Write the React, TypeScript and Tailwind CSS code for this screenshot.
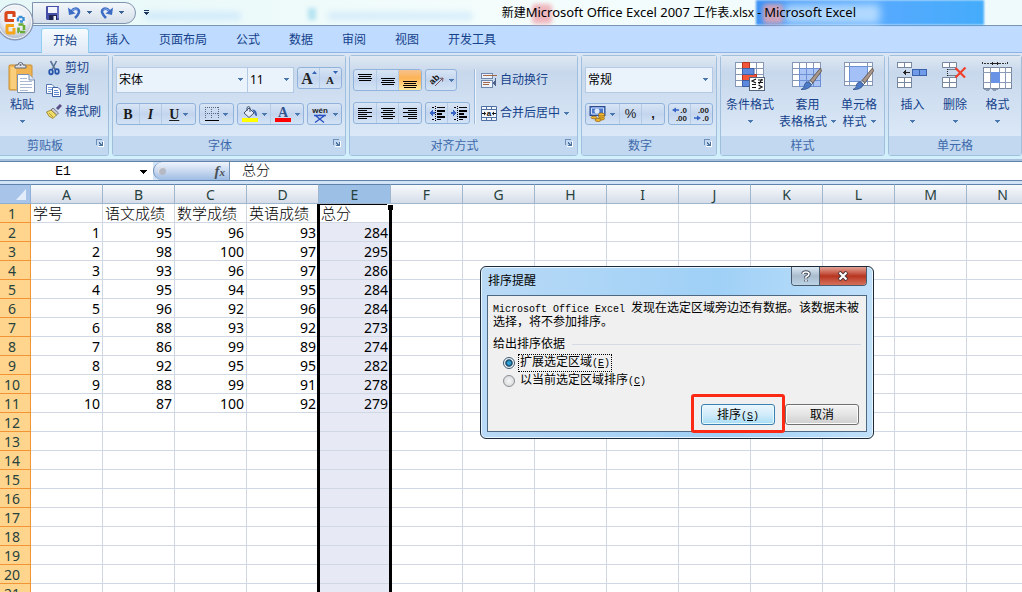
import React, { useState } from "react";

const COLUMNS = "ABCDEFGHIJKLMN".split("");
const TABS = ["开始", "插入", "页面布局", "公式", "数据", "审阅", "视图", "开发工具"];
const HEADINGS = ["学号", "语文成绩", "数学成绩", "英语成绩", "总分"];
const SCORES = [
  [1, 95, 96, 93, 284],
  [2, 98, 100, 97, 295],
  [3, 93, 96, 97, 286],
  [4, 95, 94, 95, 284],
  [5, 96, 92, 96, 284],
  [6, 88, 93, 92, 273],
  [7, 86, 99, 89, 274],
  [8, 92, 95, 95, 282],
  [9, 88, 99, 91, 278],
  [10, 87, 100, 92, 279],
];
const ROW_COUNT = 21;

interface ChildrenProps {
  children: React.ReactNode;
  className?: string;
}

function Caret({ className = "" }: { className?: string }) {
  return (
    <svg
      className={`shrink-0 ${className}`}
      width="5"
      height="3"
      viewBox="0 0 5 3"
      shapeRendering="crispEdges"
      fill="currentColor"
    >
      <path d="M0 0h5v1H0zM1 1h3v1H1zM2 2h1v1H2z" />
    </svg>
  );
}

function Pixels({
  w,
  h,
  children,
}: {
  w: number;
  h: number;
  children: React.ReactNode;
}) {
  return (
    <svg
      className="shrink-0"
      width={w}
      height={h}
      viewBox={`0 0 ${w} ${h}`}
      shapeRendering="crispEdges"
      fill="none"
    >
      {children}
    </svg>
  );
}

/* ---------- ribbon building blocks ---------- */

function Group({
  title,
  launcher = false,
  className = "",
  children,
}: ChildrenProps & { title: string; launcher?: boolean }) {
  return (
    <section
      className={`flex shrink-0 flex-col rounded-[3px] border border-[#9fbfdd] bg-linear-to-b from-[#dde7f2] to-[#dce9f7] shadow-[inset_1px_1px_0_#eaf2fa] ${className}`}
    >
      <div className="h-20 bg-linear-to-b from-[#dfe8f2] via-[#c8d8ec] via-20% to-[#dae8f7]">
        {children}
      </div>
      <footer
        className={`relative flex h-[19px] items-center justify-center bg-[#c1d8f0] text-[#3e6aaa] ${
          launcher ? "pr-[18px]" : ""
        }`}
      >
        {title}
        {launcher && (
          <button
            aria-label={`${title}选项`}
            className="absolute right-1 top-[3px] h-2 w-2"
          >
            <Pixels w={8} h={8}>
              <path d="M0 6V0h6v1H1v5z" fill="#7090b8" />
              <path d="M3 3h1v1h1v1h1V3h1v4H3V6h1V5H3z" fill="#4f739f" />
              <path d="M7 2h1v6H2V7h5z" fill="#fff" />
            </Pixels>
          </button>
        )}
      </footer>
    </section>
  );
}

function ButtonSet({ children, className = "" }: ChildrenProps) {
  return (
    <div
      className={`flex h-[22px] shrink-0 divide-x divide-[#b4cbe6] overflow-hidden rounded-[3px] border border-[#91b3db] bg-linear-to-b from-[#d8e5f5] via-[#c3d5ee] via-50% to-[#d3e3f6] ${className}`}
    >
      {children}
    </div>
  );
}

function Tool({
  label,
  caret = false,
  active = false,
  children,
}: {
  label: string;
  caret?: boolean;
  active?: boolean;
  children: React.ReactNode;
}) {
  return (
    <button
      aria-label={label}
      className={`flex items-center justify-center gap-1 text-[#1a1a1a] ${
        caret ? "flex-[3]" : "flex-[2]"
      } ${
        active ? "bg-linear-to-b from-[#f6c28c] via-[#fdb354] via-40% to-[#fee79b]" : ""
      }`}
    >
      {children}
      {caret && <Caret className="text-[#4a77ae]" />}
    </button>
  );
}

function Combo({
  label,
  value,
  className = "",
}: {
  label: string;
  value: string;
  className?: string;
}) {
  return (
    <div className={`relative h-[26px] text-[#4a77ae] ${className}`}>
      <select
        aria-label={label}
        defaultValue={value}
        className="h-full w-full appearance-none border border-[#b3c9e4] bg-[#eaf2fb] pl-[2px] text-[12px] text-black"
      >
        <option>{value}</option>
      </select>
      <Caret className="pointer-events-none absolute right-[5px] top-[11px]" />
    </div>
  );
}

function SmallCommand({
  label,
  caret = false,
  children,
}: {
  label: string;
  caret?: boolean;
  children: React.ReactNode;
}) {
  return (
    <button className="flex h-[22px] items-center gap-[3px] whitespace-nowrap text-[#15428b]">
      {children}
      {label}
      {caret && <Caret className="ml-px text-[#4a77ae]" />}
    </button>
  );
}

function BigCommand({
  lines,
  className = "",
  children,
}: {
  lines: string[];
  className?: string;
  children: React.ReactNode;
}) {
  return (
    <button
      className={`flex flex-col items-center whitespace-nowrap pt-[6px] leading-[17px] text-[#15428b] ${className}`}
    >
      <span className="flex h-[34px] items-start">{children}</span>
      <span>{lines[0]}</span>
      <span className="flex h-[17px] items-center gap-1">
        {lines[1]}
        <Caret className="text-[#4a77ae]" />
      </span>
    </button>
  );
}

/* ---------- icons ---------- */

function OfficeLogo() {
  return (
    <svg width="38" height="38" viewBox="0 0 38 38">
      <defs>
        <radialGradient id="orb" cx="50%" cy="35%" r="65%">
          <stop offset="0" stopColor="#ffffff" />
          <stop offset="0.6" stopColor="#e6eaf1" />
          <stop offset="1" stopColor="#a4b0c4" />
        </radialGradient>
      </defs>
      <circle cx="19" cy="19" r="18" fill="url(#orb)" stroke="#7d8da8" />
      <circle cx="19" cy="19" r="16.5" fill="none" stroke="#fff" strokeOpacity="0.8" />
      <g fill="none" strokeLinejoin="round">
        <path d="M18 17.500H10V11Q10 9.500 11.500 9.500H18V14" stroke="#d9481c" strokeWidth="3.200" />
        <path d="M22 18.500V14H27.500V18.500H24" stroke="#3c8fd6" strokeWidth="2.400" strokeDasharray="4 1" />
        <path d="M18 22.500H11V28.500Q11 30 12.500 30H18V25" stroke="#f4a51c" strokeWidth="3" />
        <path d="M22.500 21.500H28V29H22.500V24" stroke="#68ab35" strokeWidth="2.600" strokeDasharray="5 1" />
      </g>
    </svg>
  );
}

function SaveIcon() {
  return (
    <svg width="14" height="14" viewBox="0 0 14 14">
      <path d="M0 1Q0 0 1 0H13V14H1L0 13Z" fill="#4650a8" />
      <path d="M2 1H11V7H2Z" fill="#f3f5fc" />
      <path d="M3 9H11V14H3Z" fill="#20264f" />
      <path d="M7.500 10H10V14H7.500Z" fill="#eef1fa" />
      <path d="M12 1V12" stroke="#8d9be0" />
    </svg>
  );
}

function UndoIcon({ flip = false }: { flip?: boolean }) {
  return (
    <svg
      className={flip ? "-scale-x-100" : ""}
      width="13"
      height="13"
      viewBox="0 0 13 13"
      fill="none"
    >
      <path d="M3 5.500Q7 1 10 3.500T7 12" stroke="#3c6cc4" strokeWidth="2.600" />
      <path d="M0 1.500L1 9L7.500 7.500Z" fill="#3c6cc4" />
      <path d="M4 4.500Q8 1.500 9.500 4" stroke="#8fb2ea" />
    </svg>
  );
}

function PasteIcon() {
  return (
    <svg width="28" height="32" viewBox="0 0 28 32">
      <rect x="1" y="3" width="23" height="25" rx="1" fill="#f0b552" stroke="#c98f35" />
      <path d="M2.500 5H8V27H2.500Z" fill="#f9cf7d" />
      <path d="M7 6V4Q7 3 9 3H10Q10 0.500 12.500 0.500T15 3H16Q18 3 18 4V6Z" fill="#dfe3ea" stroke="#5e6678" />
      <circle cx="12.500" cy="3" r="1" fill="#5e6678" />
      <path d="M9.500 12.500H21L26.500 18V30.500H9.500Z" fill="#fff" stroke="#7a8fb4" />
      <path d="M21 12.500V18H26.500" fill="#dbe6f6" stroke="#7a8fb4" />
      <path d="M12 16.500H19M12 19.500H24M12 22.500H24M12 25.500H24M12 28.500H20" stroke="#a9b9d3" />
    </svg>
  );
}

function CutIcon() {
  return (
    <svg width="16" height="16" viewBox="0 0 16 16" fill="none">
      <path d="M4.500 1L9.500 10M10.500 1L6 10" stroke="#5d7396" strokeWidth="1.600" />
      <ellipse cx="5" cy="12" rx="1.800" ry="2.300" stroke="#2756ad" strokeWidth="1.800" />
      <ellipse cx="11" cy="11.500" rx="1.800" ry="2.300" stroke="#2756ad" strokeWidth="1.800" />
    </svg>
  );
}

function CopyIcon() {
  return (
    <svg width="16" height="16" viewBox="0 0 16 16" fill="none">
      <path d="M0.500 2.500H6L8.500 5V11.500H0.500Z" fill="#fff" stroke="#5577b2" />
      <path d="M2 5.500H6M2 7.500H6M2 9.500H5" stroke="#7ca0dc" />
      <path d="M6.500 5.500H12L14.500 8V14.500H6.500Z" fill="#fff" stroke="#3d62a6" />
      <path d="M8 8.500H12M8 10.500H13M8 12.500H13" stroke="#5c87d0" />
    </svg>
  );
}

function BrushIcon() {
  return (
    <svg width="16" height="16" viewBox="0 0 16 16">
      <path d="M11 5L15 1" stroke="#5a5288" strokeWidth="3" />
      <path d="M7 4L12.500 9L10.500 11L5 6Z" fill="#c8cad8" stroke="#5e6076" strokeWidth="0.800" />
      <path d="M5 6L10.500 11L7 14.500Q2 13 0.500 8Z" fill="#f0dc68" stroke="#8c7a28" strokeWidth="0.800" />
      <path d="M3 9L7.500 13.500" stroke="#b49a35" />
    </svg>
  );
}

function Lines({ widths, top = 2, align = "center" }: { widths: number[]; top?: number; align?: string }) {
  return (
    <Pixels w={14} h={15}>
      {widths.map((w, i) => (
        <rect
          key={i}
          x={align === "left" ? 0 : align === "right" ? 14 - w : Math.floor((14 - w) / 2)}
          y={top + i * 2}
          width={w}
          height="1"
          fill="#000"
        />
      ))}
    </Pixels>
  );
}

function BordersIcon() {
  return (
    <Pixels w={14} h={14}>
      <path
        d="M0 0.500H14M0 6.500H14M0.500 0V12M6.500 0V12M13.500 0V12"
        stroke="#5a6880"
        strokeDasharray="1 1"
      />
      <path d="M0 13.500H14" stroke="#000" />
    </Pixels>
  );
}

function FillIcon() {
  return (
    <svg width="16" height="16" viewBox="0 0 16 16">
      <path d="M2 7L7 2L12 7L7 11.500Z" fill="#e6edf8" stroke="#42526e" />
      <path d="M5 5V1.500Q6.500 -0.500 8 1.500V6" fill="none" stroke="#42526e" />
      <path d="M10 3.500Q15 3 15 10Q12.500 10 12.500 7Z" fill="#3c62ac" />
      <path d="M0 12H16V16H0Z" fill="#ffff00" />
    </svg>
  );
}

function FontColorIcon() {
  return (
    <svg width="16" height="16" viewBox="0 0 16 16">
      <text x="8" y="11" textAnchor="middle" fontSize="14" fontWeight="bold" fontFamily="Liberation Serif, serif" fill="#35558f">
        A
      </text>
      <path d="M0 12H16V16H0Z" fill="#ff0000" />
    </svg>
  );
}

function PhoneticIcon() {
  return (
    <svg width="18" height="20" viewBox="0 0 18 20">
      <text x="9" y="9" textAnchor="middle" fontSize="8" fontFamily="Liberation Sans, sans-serif" fill="#222">
        wén
      </text>
      <path d="M3 11.500H15M9 10.500V12M5 12L13 18.500M13 12L4 18.500" stroke="#2a4fc0" strokeWidth="1.300" fill="none" />
    </svg>
  );
}

function ResizeFontIcon({ shrink = false }: { shrink?: boolean }) {
  return (
    <svg width="18" height="18" viewBox="0 0 18 18">
      <text
        x={shrink ? 8 : 7}
        y="15"
        textAnchor="middle"
        fontSize={shrink ? 11 : 16}
        fontWeight="bold"
        fontFamily="Liberation Serif, serif"
        fill="#222"
      >
        A
      </text>
      <path d={shrink ? "M11 2H16L13.500 5Z" : "M12 5H17L14.500 2Z"} fill="#3262b4" />
    </svg>
  );
}

function OrientationIcon() {
  return (
    <svg width="17" height="18" viewBox="0 0 17 18">
      <text x="2" y="12" fontSize="9" fontWeight="bold" fontFamily="Liberation Sans, sans-serif" fill="#111" transform="rotate(-45 6 10)">
        ab
      </text>
      <path d="M7 15L15 7M15 7L11.500 7.500M15 7L14.500 10.500" stroke="#7a5862" fill="none" />
    </svg>
  );
}

function IndentIcon({ increase = false }: { increase?: boolean }) {
  return (
    <Pixels w={16} h={15}>
      <path d="M3 1.500H5M8 1.500H16M3 13.500H5M8 13.500H12" stroke="#000" />
      <path d="M8 4.500H16M8 7.500H13M8 10.500H16" stroke="#000" strokeWidth="2" />
      <path d="M6.500 0V15" stroke="#000" strokeDasharray="1 1" />
      <path
        d={increase ? "M0 6H2V4L6 7L2 10V8H0Z" : "M6 6H4V4L0 7L4 10V8H6Z"}
        fill="#3664c4"
      />
    </Pixels>
  );
}

function WrapIcon() {
  return (
    <Pixels w={16} h={15}>
      <path d="M0.500 0.500H11.500V5.500H0.500ZM0.500 7.500H11.500V14.500H0.500Z" fill="#eef3fb" stroke="#6f87ab" />
      <path d="M2 2.500H16" stroke="#a5694a" />
      <path d="M2 9.500H9M2 11.500H8" stroke="#a5694a" />
      <path d="M14.500 5V10H13M12 10L14 8V12Z" stroke="#4d6488" fill="#4d6488" />
    </Pixels>
  );
}

function MergeIcon() {
  return (
    <svg className="shrink-0" width="16" height="15" viewBox="0 0 16 15">
      <path d="M0.500 0.500H15.500V14.500H0.500Z" fill="#f3f7fd" stroke="#4d6fa4" />
      <path d="M0 3.500H16M0 11.500H16M5.500 0V4M10.500 0V4M5.500 11V15M10.500 11V15" stroke="#4d6fa4" />
      <path d="M1 7.500H4.500M11.500 7.500H15" stroke="#111" />
      <path d="M3 5.500L5 7.500L3 9.500ZM13 5.500L11 7.500L13 9.500Z" fill="#111" />
      <text x="8" y="10" textAnchor="middle" fontSize="8" fontWeight="bold" fontFamily="Liberation Sans, sans-serif" fill="#111">
        a
      </text>
    </svg>
  );
}

function CurrencyIcon() {
  return (
    <svg width="17" height="16" viewBox="0 0 17 16">
      <rect x="1" y="0.500" width="15" height="9" fill="#4c78cc" stroke="#2d4c8c" />
      <path d="M2.500 2H14.500V8H2.500Z" fill="none" stroke="#cfe0fa" />
      <ellipse cx="8" cy="5" rx="2.500" ry="2.500" fill="#dce8fb" />
      <g fill="#f5b92f" stroke="#8b5d10" strokeWidth="0.700">
        <ellipse cx="12.500" cy="12.500" rx="3" ry="1.500" />
        <ellipse cx="12.500" cy="10.500" rx="3" ry="1.500" />
        <ellipse cx="12.500" cy="8.500" rx="3" ry="1.500" />
        <ellipse cx="5" cy="11.500" rx="3" ry="1.300" />
        <ellipse cx="9" cy="14" rx="3" ry="1.500" />
      </g>
    </svg>
  );
}

function DecimalIcon({ decrease = false }: { decrease?: boolean }) {
  return (
    <svg width="17" height="16" viewBox="0 0 17 16" fontFamily="Liberation Sans, sans-serif" fontSize="8" fontWeight="bold">
      <text x="16" y="7" textAnchor="end" fill="#222">
        {decrease ? ".00" : ".0"}
      </text>
      <text x="16" y="15" textAnchor="end" fill="#222">
        {decrease ? ".0" : ".00"}
      </text>
      <path
        d={decrease ? "M1 11.300H4V9.500L8 12L4 14.500V12.700H1Z" : "M8 3.300H5V1.500L1 4L5 6.500V4.700H8Z"}
        fill="#3664c4"
      />
    </svg>
  );
}

function GridLines() {
  return (
    <>
      <rect x="0.500" y="0.500" width="28" height="24" fill="#fff" stroke="#8697b5" />
      <path
        d="M7.500 0V25M14.500 0V25M21.500 0V25M0 6.500H29M0 12.500H29M0 18.500H29"
        stroke="#8697b5"
      />
    </>
  );
}

function PaintBrush() {
  return (
    <g>
      <path d="M28.500 6L18 18.500L21 21L29.500 9Z" fill="#a8988c" stroke="#5d4c42" strokeWidth="0.800" />
      <path d="M18 18.500L21 21L19.500 22.500L16.500 20Z" fill="#d9dde5" stroke="#4b5568" strokeWidth="0.800" />
      <path d="M16.500 20L19.500 22.500Q17 28 9 27.500Q13 26 12.500 22.500Q13.500 19.500 16.500 20Z" fill="#4c7ac6" stroke="#2f4f88" strokeWidth="0.800" />
    </g>
  );
}

function ConditionalIcon() {
  return (
    <svg width="30" height="29" viewBox="0 0 30 29">
      <GridLines />
      <path d="M7.500 0.500H14.500V6.500H7.500ZM7.500 12.500H21.500V18.500H7.500Z" fill="#f2553a" stroke="#b53521" />
      <path d="M7.500 6.500H19V12.500H7.500ZM7.500 18.500H14.500V24.500H7.500Z" fill="#5d8ade" stroke="#3b5fa8" />
      <rect x="14.500" y="15.500" width="15" height="13" fill="#fff" stroke="#53657f" />
      <path d="M21 17L17 19L21 21M17 22.500H21M23 18H28M23 20.500H28M27 17L24 22M23.500 23L27 25L23.500 27M17 25.500H21" stroke="#111" fill="none" strokeWidth="1.200" />
    </svg>
  );
}

function TableStyleIcon() {
  return (
    <svg width="31" height="29" viewBox="0 0 31 29">
      <GridLines />
      <path d="M7.500 6.500H28.500V24.500H7.500Z" fill="#a9c4f5" />
      <path d="M7.500 6.500H28.500M7.500 12.500H28.500M7.500 18.500H28.500M7.500 24.500H28.500M7.500 6V25M14.500 6V25M21.500 6V25M28.500 6V25" stroke="#6c90d3" />
      <PaintBrush />
    </svg>
  );
}

function CellStyleIcon() {
  return (
    <svg width="31" height="29" viewBox="0 0 31 29">
      <rect x="0.500" y="0.500" width="28" height="23" fill="#fff" stroke="#8697b5" />
      <path d="M5.500 0V24M23.500 0V24M0 4.500H29M0 19.500H29" stroke="#8697b5" />
      <path d="M5.500 4.500H23.500V19.500H5.500Z" fill="#a4c1f7" stroke="#6c90d3" />
      <PaintBrush />
    </svg>
  );
}

function CellBlocks() {
  return (
    <path
      d="M0.500 0.500H14.500V5.500H0.500ZM0.500 15.500H14.500V25.500H0.500ZM7.500 0V6M7.500 15V26M0 20.500H15"
      fill="#fff"
      stroke="#77879f"
    />
  );
}

function InsertIcon() {
  return (
    <Pixels w={31} h={28}>
      <CellBlocks />
      <path d="M15.500 7.500H29.500V13.500H15.500ZM22.500 7V14" fill="#6f9be8" stroke="#3b62a8" />
      <path d="M6 10.500H13M8.500 8V13M7.500 9V12" stroke="#222" />
    </Pixels>
  );
}

function DeleteIcon() {
  return (
    <svg width="26" height="28" viewBox="0 0 26 28">
      <CellBlocks />
      <path d="M5.500 7.500H15M5.500 13.500H15M5.500 7V14" stroke="#222" strokeDasharray="1 1" fill="none" />
      <path d="M13.500 6L23 15.500M23.500 5.500L13.500 15.500" stroke="#f0402a" strokeWidth="2.200" />
    </svg>
  );
}

function FormatIcon() {
  return (
    <Pixels w={31} h={30}>
      <path d="M0.500 0V3M25.500 0V3M2 1.500H24" stroke="#333" strokeDasharray="2 1" />
      <path d="M9 1.500H17M10.500 0V3M15.500 0V3" stroke="#222" />
      <rect x="1.500" y="5.500" width="28" height="21" fill="#fff" stroke="#77879f" />
      <path d="M8.500 5V27M17.500 5V27M23.500 5V27M1 10.500H30M1 20.500H30" stroke="#8c9bb5" />
      <rect x="9" y="10" width="9" height="11" fill="#6994e6" />
      <path d="M2 27.500H8M10 27.500H16M4 28.500H7M11 28.500H14" stroke="#8c9bb5" />
    </Pixels>
  );
}

/* ---------- window areas ---------- */

function TitleBar() {
  return (
    <header className="relative flex h-[26px] shrink-0 items-center border-b border-[#7b96b5] bg-linear-to-r from-[#e6f7f8] via-[#f4fdfc] to-[#effafd]">
      <div className="absolute inset-y-0 left-[74%] right-[38px] bg-linear-to-r from-[#3f93f5] via-[#58aaff] to-[#44acfb] blur-[1px]" />
      <div className="absolute left-[532px] top-1 h-5 w-5 rounded bg-[#eda6ae] opacity-80 blur-[2px]" />
      <div className="absolute left-[784px] top-1 h-5 w-24 rounded bg-[#c9e6ff] opacity-80 blur-[4px]" />
      <div className="absolute left-[763px] top-1 h-5 w-5 rounded bg-[#eda6ae] opacity-80 blur-[2px]" />
      <div className="absolute left-[145px] top-3 h-2 w-24 bg-[#bfe0fb] opacity-60 blur-[3px]" />
      <div className="absolute left-[308px] top-2 h-3 w-2 bg-[#8fd4ec] opacity-60 blur-[2px]" />
      <div className="absolute left-[328px] top-3 h-2 w-36 bg-[#c4e2fa] opacity-60 blur-[3px]" />
      <button aria-label="Office 按钮" className="absolute -left-1 top-[3px] z-10">
        <OfficeLogo />
      </button>
      <div className="relative ml-8 flex h-[22px] w-[104px] items-center rounded-r-full border border-[#7f93ad] bg-linear-to-b from-[#f3f7fb] to-[#d5dfea] pl-[13px] text-[#3c6296]">
        <button aria-label="保存">
          <SaveIcon />
        </button>
        <button aria-label="撤消" className="ml-2 flex items-center gap-[6px]">
          <UndoIcon />
          <Caret />
        </button>
        <button aria-label="恢复" className="ml-2 flex items-center gap-[6px]">
          <UndoIcon flip />
          <Caret />
        </button>
      </div>
      <button aria-label="自定义快速访问工具栏" className="relative ml-2 text-[#1c355e]">
        <Pixels w={5} h={5}>
          <path d="M0 0h5v1H0zM0 2h5v1H0zM1 3h3v1H1zM2 4h1v1H2z" fill="currentColor" />
        </Pixels>
      </button>
      <h1 className="relative ml-auto mr-[166px] flex items-baseline whitespace-pre pt-px text-[13px] text-black">
        <span className="text-[12px]">新建</span>
        Microsoft Office Excel 2007{" "}
        <span className="text-[12px]">工作表.xlsx - </span>
        Microsoft Excel
      </h1>
    </header>
  );
}

function TabStrip() {
  return (
    <nav className="flex h-[27px] shrink-0 items-end gap-[5px] border-b border-[#8db2e3] bg-[#bfdbff] pl-[41px] text-[#15428b]">
      {TABS.map((tab, i) => (
        <button
          key={tab}
          className={`h-[25px] rounded-t-[3px] px-3 ${
            i === 0
              ? "-mb-px border border-b-0 border-[#8fd0ee] bg-linear-to-b from-[#f5fafe] to-[#dfe9f5] px-[11px] pb-px"
              : ""
          }`}
        >
          {tab}
        </button>
      ))}
    </nav>
  );
}

function Ribbon() {
  return (
    <div className="flex h-[108px] shrink-0 items-start gap-[3px] border-b-2 border-[#a9bfdc] bg-linear-to-b from-[#dbe6f4] via-[#d0e1f3] to-[#d2f1fc] pt-[2px] text-[12px]">
      <Group title="剪贴板" launcher className="w-[109px] rounded-l-none border-l-0">
        <div className="flex gap-[10px] pl-2">
          <BigCommand lines={["粘贴"]}>
            <PasteIcon />
          </BigCommand>
          <div className="flex flex-col pt-[1px]">
            <SmallCommand label="剪切">
              <CutIcon />
            </SmallCommand>
            <SmallCommand label="复制">
              <CopyIcon />
            </SmallCommand>
            <SmallCommand label="格式刷">
              <BrushIcon />
            </SmallCommand>
          </div>
        </div>
      </Group>

      <Group title="字体" launcher className="w-[234px]">
        <div className="flex flex-col gap-[10px] px-[3px] pt-[11px]">
          <div className="flex">
            <Combo label="字体" value="宋体" className="w-[132px]" />
            <Combo label="字号" value="11" className="-ml-px w-[47px]" />
            <ButtonSet className="ml-[3px] w-[45px]">
              <Tool label="增大字号">
                <ResizeFontIcon />
              </Tool>
              <Tool label="减小字号">
                <ResizeFontIcon shrink />
              </Tool>
            </ButtonSet>
          </div>
          <div className="flex gap-[3px] font-['Liberation_Serif',serif] text-[14px] font-bold">
            <ButtonSet className="w-20">
              <Tool label="加粗">B</Tool>
              <Tool label="倾斜">
                <i>I</i>
              </Tool>
              <Tool label="下划线" caret>
                <u>U</u>
              </Tool>
            </ButtonSet>
            <ButtonSet className="w-[35px]">
              <Tool label="边框" caret>
                <BordersIcon />
              </Tool>
            </ButtonSet>
            <ButtonSet className="w-[67px]">
              <Tool label="填充颜色" caret>
                <FillIcon />
              </Tool>
              <Tool label="字体颜色" caret>
                <FontColorIcon />
              </Tool>
            </ButtonSet>
            <ButtonSet className="w-[35px]">
              <Tool label="拼音指南" caret>
                <PhoneticIcon />
              </Tool>
            </ButtonSet>
          </div>
        </div>
      </Group>

      <Group title="对齐方式" launcher className="w-[229px]">
        <div className="flex gap-[4px] pl-[3px] pt-[13px]">
          <div className="flex flex-col gap-[11px]">
            <div className="flex gap-[3px]">
              <ButtonSet className="w-[69px]">
                <Tool label="顶端对齐">
                  <Lines widths={[14, 12, 14, 12]} top={1} />
                </Tool>
                <Tool label="垂直居中">
                  <Lines widths={[14, 12, 14, 12]} top={5} />
                </Tool>
                <Tool label="底端对齐" active>
                  <Lines widths={[14, 12, 14, 12]} top={8} />
                </Tool>
              </ButtonSet>
              <ButtonSet className="w-8">
                <Tool label="方向" caret>
                  <OrientationIcon />
                </Tool>
              </ButtonSet>
            </div>
            <div className="flex gap-[3px]">
              <ButtonSet className="w-[69px]">
                <Tool label="文本左对齐">
                  <Lines widths={[14, 9, 14, 9, 14, 9]} align="left" />
                </Tool>
                <Tool label="居中">
                  <Lines widths={[14, 10, 14, 10, 14, 10]} />
                </Tool>
                <Tool label="文本右对齐">
                  <Lines widths={[14, 9, 14, 9, 14, 9]} align="right" />
                </Tool>
              </ButtonSet>
              <ButtonSet className="w-[45px]">
                <Tool label="减少缩进量">
                  <IndentIcon />
                </Tool>
                <Tool label="增加缩进量">
                  <IndentIcon increase />
                </Tool>
              </ButtonSet>
            </div>
          </div>
          <div className="flex flex-col gap-[11px] border-l border-[#9db9dc] pl-[6px] shadow-[inset_1px_0_0_#eef5fc]">
            <SmallCommand label="自动换行">
              <WrapIcon />
            </SmallCommand>
            <SmallCommand label="合并后居中" caret>
              <MergeIcon />
            </SmallCommand>
          </div>
        </div>
      </Group>

      <Group title="数字" launcher className="w-[136px]">
        <div className="flex flex-col gap-[10px] px-[3px] pt-[11px]">
          <Combo label="数字格式" value="常规" className="w-full" />
          <div className="flex gap-[3px] font-['Liberation_Sans',sans-serif] text-[13px] font-bold">
            <ButtonSet className="w-20">
              <Tool label="会计数字格式" caret>
                <CurrencyIcon />
              </Tool>
              <Tool label="百分比样式">
                <span className="font-normal">%</span>
              </Tool>
              <Tool label="千位分隔样式">,</Tool>
            </ButtonSet>
            <ButtonSet className="w-[45px]">
              <Tool label="增加小数位数">
                <DecimalIcon />
              </Tool>
              <Tool label="减少小数位数">
                <DecimalIcon decrease />
              </Tool>
            </ButtonSet>
          </div>
        </div>
      </Group>

      <Group title="样式" className="w-[165px]">
        <div className="flex gap-[5px] pl-[5px]">
          <BigCommand lines={["条件格式"]}>
            <ConditionalIcon />
          </BigCommand>
          <BigCommand lines={["套用", "表格格式"]}>
            <TableStyleIcon />
          </BigCommand>
          <BigCommand lines={["单元格", "样式"]}>
            <CellStyleIcon />
          </BigCommand>
        </div>
      </Group>

      <Group title="单元格" className="min-w-[134px] flex-1">
        <div className="flex gap-[14px] pl-2">
          <BigCommand lines={["插入"]}>
            <InsertIcon />
          </BigCommand>
          <BigCommand lines={["删除"]}>
            <DeleteIcon />
          </BigCommand>
          <BigCommand lines={["格式"]}>
            <FormatIcon />
          </BigCommand>
        </div>
      </Group>
    </div>
  );
}

function FormulaBar() {
  return (
    <div className="flex h-5 shrink-0 border-y border-[#5f83ab] bg-white font-['Liberation_Mono','Noto_Sans_CJK_SC',monospace]">
      <div className="relative w-[153px] text-black">
        <input
          aria-label="名称框"
          defaultValue="E1"
          className="h-full w-full pr-[27px] pt-px text-center text-[13px] outline-none"
        />
        <svg className="absolute right-[6px] top-[8px]" width="7" height="4" viewBox="0 0 7 4" shapeRendering="crispEdges">
          <path d="M0 0h7v1H0zM1 1h5v1H1zM2 2h3v1H2zM3 3h1v1H3z" />
        </svg>
      </div>
      <div className="w-[77px] border-r border-[#7595ba] bg-[#d3e3f7]">
        <div className="flex h-full items-center justify-between rounded-l-full border-l border-[#6d8fb8] bg-linear-to-b from-[#eef4fc] via-[#c9d9f0] to-[#9ebce3] px-1">
          <span className="h-2 w-2 rounded-full bg-[#b4b9c4] shadow-[inset_1px_1px_1px_#e8eaee]" />
          <button
            aria-label="插入函数"
            className="font-['Liberation_Serif',serif] text-[15px] font-bold italic leading-[16px] text-[#4b5058]"
          >
            f<span className="text-[11px]">x</span>
          </button>
        </div>
      </div>
      <input
        aria-label="编辑栏"
        defaultValue="总分"
        className="min-w-0 flex-1 pl-3 pt-px text-[14px] font-light text-black outline-none"
      />
    </div>
  );
}

function Sheet() {
  const rows = Array.from({ length: ROW_COUNT }, (_, i) => i);

  return (
    <main className="relative mt-[3px] min-h-0 flex-1 overflow-hidden bg-white">
      <table className="w-0 table-fixed border-separate border-spacing-0 font-['Noto_Sans','Noto_Sans_CJK_SC',sans-serif] text-[14px] leading-[17px] text-black">
        <colgroup>
          <col className="w-[31px]" />
          {COLUMNS.map((c) => (
            <col key={c} className="w-[72px]" />
          ))}
        </colgroup>
        <thead>
          <tr>
            <th className="h-5 border-y border-r border-[#8fb0d6] border-t-[#5f83ab] bg-[#a9c4e9] p-0">
              <svg className="ml-auto mr-1 mt-[1px]" width="10" height="11" viewBox="0 0 10 11">
                <path d="M10 0V11H0Z" fill="#e3edfa" />
              </svg>
            </th>
            {COLUMNS.map((c) => (
              <th
                key={c}
                scope="col"
                className={`h-5 border-y border-r border-[#9eb6ce] border-t-[#5f83ab] p-0 pt-px font-normal text-[#27413e] ${
                  c === "E"
                    ? "bg-[#9bbfe5]"
                    : "bg-linear-to-b from-[#f8fafc] to-[#d5dde9]"
                }`}
              >
                {c}
              </th>
            ))}
          </tr>
        </thead>
        <tbody>
          {rows.map((r) => (
            <tr key={r}>
              <th
                scope="row"
                className="h-[19px] border-b border-r border-[#f29436] bg-[#ffd58d] p-0 pr-[6px] pt-px font-normal text-[#27413e]"
              >
                {r + 1}
              </th>
              {COLUMNS.map((c, i) => {
                const value = r === 0 ? HEADINGS[i] : SCORES[r - 1]?.[i];
                return (
                  <td
                    key={c}
                    className={`h-[19px] whitespace-nowrap border-b border-r border-[#d0d7e5] p-0 pr-[2px] ${
                      r === 0 ? "pl-[2px] text-left text-[15px] font-light" : "pt-px text-right"
                    } ${c === "E" && r > 0 ? "bg-[#e7eaf5]" : ""}`}
                  >
                    {value}
                  </td>
                );
              })}
            </tr>
          ))}
        </tbody>
      </table>

      {/* whole-column selection outline with its fill handle */}
      <div className="pointer-events-none absolute bottom-0 left-[317px] top-5 w-[75px] border-x-3 border-t border-black">
        <div className="absolute -right-1 -top-px h-[6px] w-[6px] border-l border-t border-white bg-black" />
      </div>
    </main>
  );
}

const Latin = ({ children }: ChildrenProps) => (
  <span className="font-['Liberation_Mono',monospace] text-[10px]">{children}</span>
);

function SortChoice({
  id,
  label,
  accessKey,
  checked,
  onSelect,
}: {
  id: string;
  label: string;
  accessKey: string;
  checked: boolean;
  onSelect: () => void;
}) {
  return (
    <div className="flex h-[18px] items-center gap-[3px]">
      <input
        type="radio"
        name="sort"
        id={id}
        checked={checked}
        onChange={onSelect}
        className="h-3 w-3 appearance-none rounded-full border border-[#8a8f94] bg-radial from-[#f6f6f6] to-[#cfd3d6] checked:border-[#3f5a72] checked:bg-radial checked:from-[#2fa3d8] checked:from-20% checked:via-[#12405f] checked:via-45% checked:to-[#eef3f6] checked:to-60%"
      />
      <label
        htmlFor={id}
        className={`border border-dotted px-px leading-[14px] ${
          checked ? "border-black" : "border-transparent"
        }`}
      >
        {label}
        <Latin>
          (<u>{accessKey}</u>)
        </Latin>
      </label>
    </div>
  );
}

function SortWarning() {
  const [choice, setChoice] = useState("expand");

  return (
    <div
      role="dialog"
      aria-labelledby="sort-title"
      className="absolute left-[480px] top-[266px] flex w-[394px] flex-col rounded-[6px] border border-[#1d2b3a] bg-linear-to-r from-[#b9daf6] via-[#9fd0f6] via-60% to-[#c0e0fa] px-[6px] pb-[6px] text-[12px] text-black shadow-[inset_0_0_0_1px_#e8f5ff]"
    >
      <header className="flex h-7 items-start justify-between">
        <h2 id="sort-title" className="pl-px pt-[6px] leading-[16px]">
          排序提醒
        </h2>
        <div className="flex h-[19px] w-[76px] overflow-hidden rounded-b-[4px] border border-t-0 border-[#4a5b6e]">
          <button
            aria-label="帮助"
            className="flex w-7 items-center justify-center border-r border-[#4a5b6e] bg-linear-to-b from-[#dce9f4] via-[#a9bccd] via-50% to-[#bcd3e6]"
          >
            <svg width="10" height="13" viewBox="0 0 10 13" fill="none">
              <path d="M2 4Q2 2 5 2T8 4Q8 5.500 5 7V8.500M5 9.800V11.500" stroke="#45505e" strokeWidth="3.400" />
              <path d="M2 4Q2 2 5 2T8 4Q8 5.500 5 7V8.500M5 9.800V11.500" stroke="#fff" strokeWidth="1.600" />
            </svg>
          </button>
          <button
            aria-label="关闭"
            className="flex flex-1 items-center justify-center bg-linear-to-b from-[#e3a296] via-[#b7341f] via-50% to-[#d5705a]"
          >
            <svg width="12" height="10" viewBox="0 0 12 10" fill="none">
              <path d="M2 1L10 9M10 1L2 9" stroke="#4d2f33" strokeWidth="4" />
              <path d="M2.500 1.500L9.500 8.500M9.500 1.500L2.500 8.500" stroke="#fff" strokeWidth="2.200" />
            </svg>
          </button>
        </div>
      </header>

      <div className="border border-[#4d6880] bg-[#f0f0f0] px-[5px] py-[6px]">
        <p className="leading-[12px]">
          <Latin>Microsoft Office Excel </Latin>
          发现在选定区域旁边还有数据。该数据未被
          <br />
          选择，将不参加排序。
        </p>
        <fieldset className="mt-[9px]">
          <legend className="flex w-full items-center gap-[7px] leading-[14px] after:h-px after:flex-1 after:bg-[#d5dbe3]">
            给出排序依据
          </legend>
          <div className="pl-[10px] pt-[3px]">
            <SortChoice
              id="sort-expand"
              label="扩展选定区域"
              accessKey="E"
              checked={choice === "expand"}
              onSelect={() => setChoice("expand")}
            />
            <SortChoice
              id="sort-current"
              label="以当前选定区域排序"
              accessKey="C"
              checked={choice === "current"}
              onSelect={() => setChoice("current")}
            />
          </div>
        </fieldset>
        <div className="mt-[14px] flex justify-end gap-[10px] pr-[2px]">
          <div className="relative">
            <button className="h-[21px] w-[74px] rounded-[3px] border border-[#3c7fb1] bg-linear-to-b from-[#eaf6fd] via-[#d2ecfa] via-50% to-[#a6dcf5] shadow-[inset_0_0_0_1px_#e6fafd]">
              排序
              <Latin>
                (<u>S</u>)
              </Latin>
            </button>
            <span className="pointer-events-none absolute -inset-x-[10px] -bottom-[8px] -top-[10px] rounded-[3px] border-3 border-[#fc2a14]" />
          </div>
          <button className="h-[21px] w-[74px] rounded-[3px] border border-[#707070] bg-linear-to-b from-[#f4f4f4] via-[#e4e4e4] via-50% to-[#cfcfcf] shadow-[inset_0_0_0_1px_#fbfbfb]">
            取消
          </button>
        </div>
      </div>
    </div>
  );
}

export default function App() {
  return (
    <div className="relative flex h-screen flex-col overflow-hidden bg-[#d3e3f7] font-['Noto_Sans','Noto_Sans_CJK_SC',sans-serif] text-[12px]">
      <TitleBar />
      <TabStrip />
      <Ribbon />
      <FormulaBar />
      <Sheet />
      <SortWarning />
    </div>
  );
}
